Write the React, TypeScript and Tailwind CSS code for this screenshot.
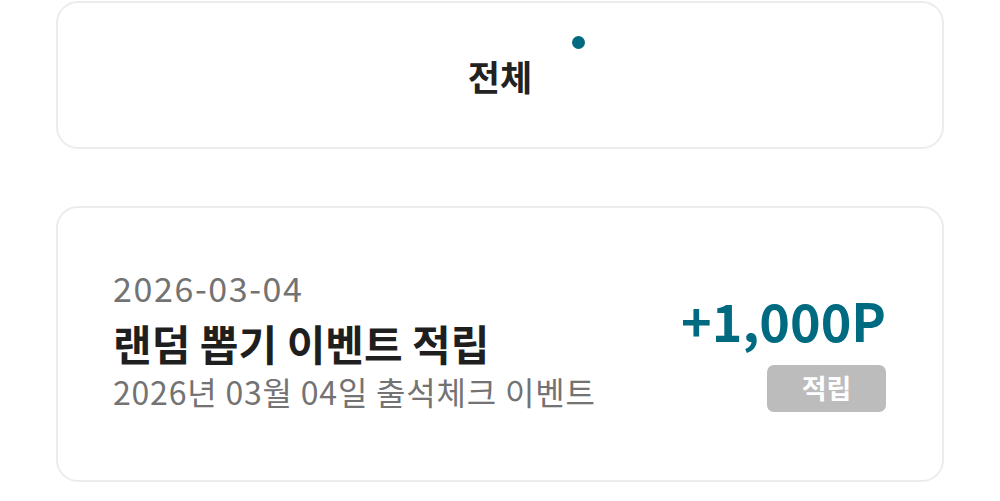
export default function App() {
  return (
    <div
      className="w-[1000px] h-[501px] bg-white px-[56px] pt-px flex flex-col gap-[57px] overflow-hidden"
      style={{ fontFamily: '"Noto Sans CJK KR", "Noto Sans", sans-serif' }}
    >
      <div className="relative h-[148px] rounded-[22px] border-2 border-[#ececec] flex items-center justify-center">
        <span className="text-[35px] font-bold text-[#222222] leading-none">전체</span>
        <span className="absolute left-[514px] top-[33px] w-[13px] h-[13px] rounded-full bg-[#006a80]" />
      </div>

      <div className="h-[276px] rounded-[22px] border-2 border-[#ececec] pl-[55px] pr-[56px] pt-[60px] flex items-start justify-between">
        <div className="flex flex-col">
          <span className="text-[34px] leading-[40px] text-[#737373] tracking-[1.6px]">2026-03-04</span>
          <span className="mt-[11px] text-[42px] leading-[48px] font-bold text-[#1f1f1f]">
            랜덤 뽑기 이벤트 적립
          </span>
          <span className="mt-[6px] text-[32px] leading-[36px] text-[#737373] tracking-[0.8px]">
            2026년 03월 04일 출석체크 이벤트
          </span>
        </div>
        <div className="mt-[22px] flex flex-col items-end gap-[15px]">
          <span className="text-[52px] leading-[60px] font-bold text-[#006a80]">+1,000P</span>
          <span className="w-[119px] h-[47px] rounded-[7px] bg-[#bcbcbc] text-white text-[27px] font-semibold flex items-center justify-center">
            적립
          </span>
        </div>
      </div>
    </div>
  );
}
